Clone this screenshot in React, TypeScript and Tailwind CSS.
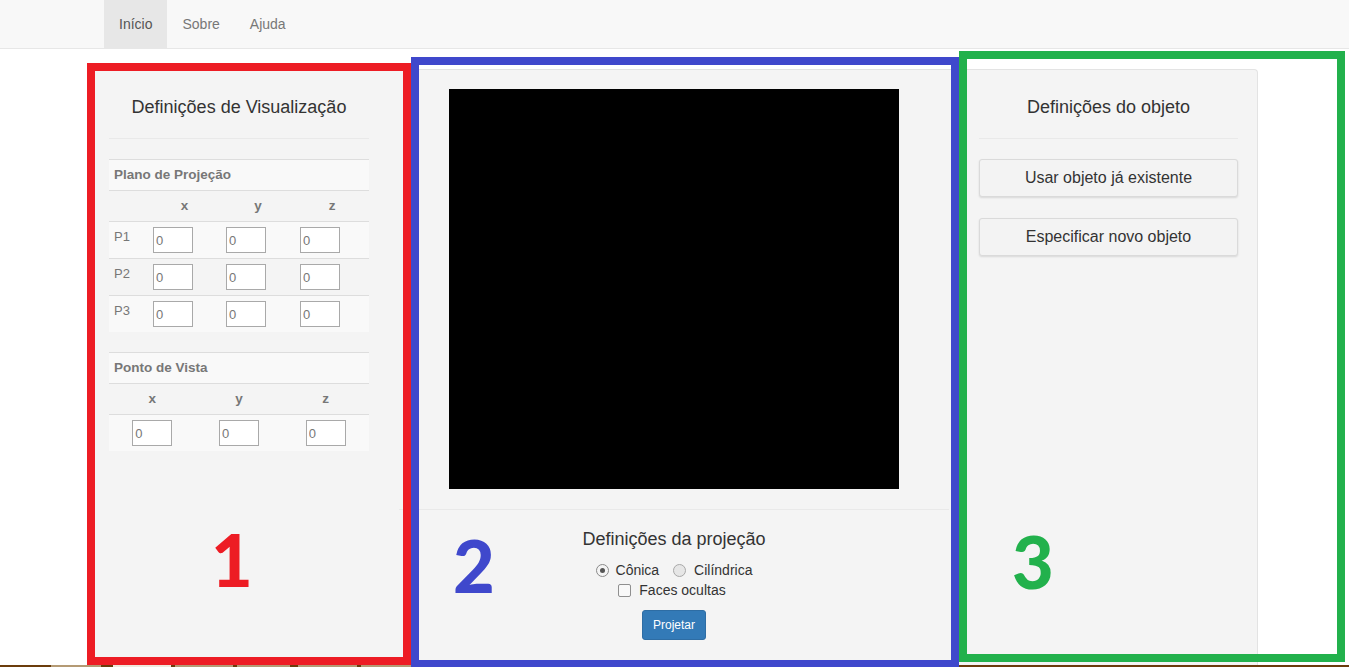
import React from "react";

function Inp() {
  return (
    <input
      readOnly
      value="0"
      className="w-[40px] h-[26px] border border-[#a9a9a9] bg-white pl-[2px] text-[13px] text-[#777] outline-none"
    />
  );
}

function HeadRow({ label }: { label: string }) {
  return (
    <div className="h-[31px] border-t border-[#dddddd] bg-[#f9f9f9] px-[5px] flex items-center text-[13.5px] font-bold text-[#777]">
      {label}
    </div>
  );
}

function Radio({ checked }: { checked?: boolean }) {
  return (
    <span
      className={
        "w-[13px] h-[13px] rounded-full border flex items-center justify-center " +
        (checked ? "border-[#8a8a8a] bg-[#f4f4f4]" : "border-[#a8a8a8] bg-[#e6e6e6]")
      }
    >
      {checked ? <span className="w-[5px] h-[5px] rounded-full bg-[#555]" /> : null}
    </span>
  );
}

export default function App() {
  const pRows = ["P1", "P2", "P3"];
  return (
    <div className="relative h-[667px] overflow-hidden bg-white font-['Liberation_Sans',Arial,sans-serif] text-[#333]">
      <nav className="h-[49px] bg-[#f8f8f8] border-b border-[#e7e7e7]">
        <div className="ml-[104px] flex h-[48px] text-[14px]">
          <span className="px-[15px] flex items-center bg-[#e7e7e7] text-[#555]">Início</span>
          <span className="px-[15px] flex items-center text-[#777]">Sobre</span>
          <span className="px-[15px] flex items-center text-[#777]">Ajuda</span>
        </div>
      </nav>

      <div className="mt-[20px] ml-[90px] flex h-[620px]">
        {/* Left well */}
        <div className="w-[298px] h-full bg-[#f4f4f4] border-t border-[#e3e3e3] rounded-tl-[4px] pt-[19px] px-[19px]">
          <h4 className="mt-[8px] text-[18px] leading-[20px] text-center text-[#333]">
            Definições de Visualização
          </h4>
          <div className="mt-[21px] h-px bg-[#e9e9e9]" />
          <div className="mt-[20px] w-[260px]">
            <HeadRow label="Plano de Projeção" />
            <div className="h-[31px] border-t border-[#dddddd] grid grid-cols-[39px_73px_74px_74px] items-center text-[13.5px] font-bold text-[#777]">
              <span />
              <span className="text-center">x</span>
              <span className="text-center">y</span>
              <span className="text-center">z</span>
            </div>
            {pRows.map((p, i) => (
              <div
                key={p}
                className={
                  "h-[37px] border-t border-[#dddddd] grid grid-cols-[39px_73px_74px_74px] " +
                  (i % 2 === 0 ? "bg-[#f9f9f9]" : "")
                }
              >
                <span className="pl-[5px] pt-[6px] text-[13px] leading-[18px] text-[#777]">{p}</span>
                <span className="pl-[5px] pt-[5px]"><Inp /></span>
                <span className="pl-[5px] pt-[5px]"><Inp /></span>
                <span className="pl-[5px] pt-[5px]"><Inp /></span>
              </div>
            ))}
          </div>

          <div className="mt-[20px] w-[260px]">
            <HeadRow label="Ponto de Vista" />
            <div className="h-[31px] border-t border-[#dddddd] grid grid-cols-3 items-center text-[13.5px] font-bold text-[#777]">
              <span className="text-center">x</span>
              <span className="text-center">y</span>
              <span className="text-center">z</span>
            </div>
            <div className="h-[37px] border-t border-[#dddddd] grid grid-cols-3 bg-[#f9f9f9]">
              <span className="pt-[5px] flex justify-center"><Inp /></span>
              <span className="pt-[5px] flex justify-center"><Inp /></span>
              <span className="pt-[5px] flex justify-center"><Inp /></span>
            </div>
          </div>
        </div>

        {/* Center well */}
        <div className="w-[572px] h-full bg-[#f4f4f4] border-t border-[#e3e3e3] pt-[19px]">
          <div className="mx-auto w-[450px] h-[400px] bg-black" />
          <div className="mt-[20px] mx-[11px] h-px bg-[#e9e9e9]" />
          <div className="flex flex-col items-center">
            <h4 className="mt-[19px] text-[18px] leading-[20px] text-[#333]">Definições da projeção</h4>
            <div className="mt-[11px] h-[20px] flex items-center text-[14px] text-[#333]">
              <Radio checked />
              <span className="ml-[7px]">Cônica</span>
              <span className="ml-[14px]"><Radio /></span>
              <span className="ml-[8px]">Cilíndrica</span>
            </div>
            <div className="h-[20px] flex items-center text-[14px] text-[#333] mr-[4px]">
              <span className="w-[13px] h-[13px] rounded-[2px] border border-[#8f8f8f] bg-[#f8f8f8]" />
              <span className="ml-[8px]">Faces ocultas</span>
            </div>
            <button className="mt-[10px] h-[30px] px-[10px] rounded-[3px] bg-[#337ab7] border border-[#2e6da4] text-white text-[12px]">
              Projetar
            </button>
          </div>
        </div>

        {/* Right well */}
        <div className="w-[298px] h-full bg-[#f4f4f4] border-t border-r border-[#e3e3e3] rounded-tr-[4px] pt-[19px] pl-[19px] pr-[19px]">
          <h4 className="mt-[8px] text-[18px] leading-[20px] text-center text-[#333]">
            Definições do objeto
          </h4>
          <div className="mt-[21px] h-px bg-[#e9e9e9]" />
          <button className="mt-[20px] w-full h-[38px] rounded-[3px] border border-[#dadada] bg-[#f3f3f3] shadow-[0_1px_2px_rgba(0,0,0,0.12)] text-[16px] text-[#333] flex items-center justify-center">
            Usar objeto já existente
          </button>
          <button className="mt-[21px] w-full h-[38px] rounded-[3px] border border-[#dadada] bg-[#f3f3f3] shadow-[0_1px_2px_rgba(0,0,0,0.12)] text-[16px] text-[#333] flex items-center justify-center">
            Especificar novo objeto
          </button>
        </div>
      </div>

      {/* bottom strip */}
      <div className="absolute left-0 bottom-0 w-full h-[2px] bg-[#6b3c0c] flex">
        <span className="ml-[51px] w-[50px] h-[2px] bg-[#b49a74]" />
        <span className="ml-[12px] w-[58px] h-[2px] bg-[#efe8dc]" />
        <span className="ml-[4px] w-[58px] h-[2px] bg-[#b49a74]" />
        <span className="ml-[4px] w-[53px] h-[2px] bg-[#b49a74]" />
        <span className="ml-[8px] w-[59px] h-[2px] bg-[#b49a74]" />
        <span className="ml-[4px] w-[50px] h-[2px] bg-[#b49a74]" />
      </div>

      {/* annotation boxes */}
      <div className="absolute left-[87px] top-[63px] w-[324px] h-[602px] border-[8px] border-[#ed1c24]" />
      <div className="absolute left-[411px] top-[57px] w-[548px] h-[611px] border-[8px] border-[#3f48cc]" />
      <div className="absolute left-[959px] top-[51px] w-[386px] h-[611px] border-[8px] border-[#22b14c]" />

      {/* annotation numbers */}
      <span className="absolute left-[192px] top-[523px] w-[80px] text-center font-['Lato',sans-serif] font-black text-[72px] leading-[72px] text-[#ed1c24]">1</span>
      <span className="absolute left-[434px] top-[529px] w-[80px] text-center font-['Lato',sans-serif] font-black text-[72px] leading-[72px] text-[#3f48cc]">2</span>
      <span className="absolute left-[993px] top-[525px] w-[80px] text-center font-['Lato',sans-serif] font-black text-[72px] leading-[72px] text-[#22b14c]">3</span>
    </div>
  );
}
